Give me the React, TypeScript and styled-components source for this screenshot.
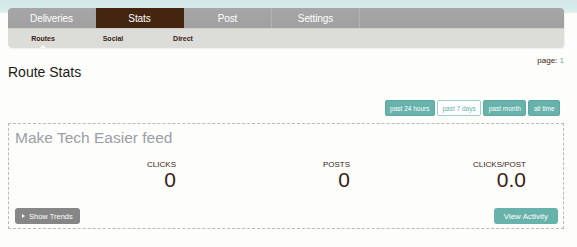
import styled, { createGlobalStyle } from 'styled-components';

const GlobalStyle = createGlobalStyle`
  html, body {
    margin: 0;
    padding: 0;
  }
  body {
    font-family: "Liberation Sans", Arial, sans-serif;
    background: linear-gradient(to bottom, #d2e7e7 0, #dbeded 12px, #eef6f6 13px, #fdfdfb 14px);
    background-repeat: no-repeat;
    background-color: #fdfdfb;
    min-height: 247px;
  }
`;

const Page = styled.div`
  padding: 8px 13px 0 8px;
`;

const Nav = styled.nav`
  border-radius: 4px;
  overflow: hidden;
  box-shadow: 1px 1px 1px rgba(0, 0, 0, 0.06);
`;

const TabRow = styled.div`
  display: flex;
  height: 20px;
  background: linear-gradient(to bottom, #a6a6a6, #a0a0a0);
`;

const Tab = styled.div<{ $active?: boolean }>`
  width: 87px;
  display: flex;
  align-items: center;
  justify-content: center;
  font-size: 10px;
  color: #ffffff;
  letter-spacing: -0.1px;
  background: ${p => (p.$active ? '#44250f' : 'transparent')};
  border-right: 1px solid ${p => (p.$active ? '#44250f' : '#b4b4b4')};
  &:first-child {
    border-right-color: #a3a3a3;
  }
`;

const SubNav = styled.div`
  display: flex;
  height: 20px;
  background: #dcdcd9;
  border-top: 1px solid #cfcfcc;
  box-sizing: border-box;
`;

const SubItem = styled.div<{ $active?: boolean }>`
  position: relative;
  width: 70px;
  display: flex;
  align-items: center;
  justify-content: center;
  font-size: 7px;
  font-weight: bold;
  color: #3a2412;

  &::after {
    content: '';
    display: ${p => (p.$active ? 'block' : 'none')};
    position: absolute;
    bottom: 0;
    left: 50%;
    margin-left: -3px;
    border-left: 3px solid transparent;
    border-right: 3px solid transparent;
    border-bottom: 3px solid #fdfdfb;
  }
`;

const Header = styled.div`
  display: flex;
  justify-content: space-between;
  align-items: flex-start;
`;

const Title = styled.h1`
  margin: 16px 0 0 0;
  font-size: 14px;
  font-weight: normal;
  line-height: 16px;
  color: #1e1a16;
`;

const PageLabel = styled.div`
  margin-top: 8px;
  font-size: 8px;
  color: #3a2412;
  span {
    color: #67b2aa;
  }
`;

const RangeRow = styled.div`
  display: flex;
  justify-content: flex-end;
  gap: 2px;
  margin: 20px 4px 0 0;
`;

const RangeButton = styled.button<{ $active?: boolean }>`
  height: 16px;
  padding: 0 4.5px;
  font-family: inherit;
  font-size: 6.5px;
  border-radius: 2px;
  box-sizing: border-box;
  border: 1px solid ${p => (p.$active ? '#9fd0ca' : '#5fa9a1')};
  background: ${p => (p.$active ? '#ffffff' : '#67b2aa')};
  color: ${p => (p.$active ? '#67b2aa' : '#ffffff')};
  cursor: pointer;
`;

const FeedBox = styled.div`
  margin-top: 7px;
  border: 1px dashed #b9b9b9;
  padding: 5px 5px 4px 5px;
`;

const FeedTitle = styled.h2`
  margin: 0 0 0 1px;
  font-size: 15.5px;
  line-height: 18px;
  font-weight: normal;
  color: #9a9fa6;
`;

const StatGrid = styled.div`
  display: grid;
  grid-template-columns: 162px 174px 176px;
  margin-top: 13px;
`;

const Stat = styled.div`
  text-align: right;
`;

const StatLabel = styled.div`
  font-size: 8px;
  line-height: 9px;
  color: #3a2412;
`;

const StatValue = styled.div`
  font-size: 21px;
  line-height: 24px;
  margin-top: -1px;
  color: #3b2210;
`;

const Actions = styled.div`
  display: flex;
  justify-content: space-between;
  margin-top: 16px;
  padding-left: 1px;
`;

const ActionButton = styled.button<{ $tone: 'gray' | 'teal' }>`
  height: 16px;
  display: flex;
  align-items: center;
  gap: 4px;
  padding: 0 ${p => (p.$tone === 'gray' ? '7px' : '10px')};
  font-family: inherit;
  font-size: ${p => (p.$tone === 'gray' ? '7.5px' : '8px')};
  color: #ffffff;
  border: none;
  border-radius: 3px;
  background: ${p => (p.$tone === 'gray' ? '#868686' : '#67b2aa')};
  cursor: pointer;
`;

const Caret = styled.span`
  width: 0;
  height: 0;
  border-top: 2.5px solid transparent;
  border-bottom: 2.5px solid transparent;
  border-left: 3px solid #ffffff;
`;

const tabs = ['Deliveries', 'Stats', 'Post', 'Settings'];
const subTabs = ['Routes', 'Social', 'Direct'];
const ranges = ['past 24 hours', 'past 7 days', 'past month', 'all time'];
const stats = [
  { label: 'CLICKS', value: '0' },
  { label: 'POSTS', value: '0' },
  { label: 'CLICKS/POST', value: '0.0' },
];

export default function App() {
  return (
    <>
      <GlobalStyle />
      <Page>
        <Nav>
          <TabRow>
            {tabs.map(t => (
              <Tab key={t} $active={t === 'Stats'}>{t}</Tab>
            ))}
          </TabRow>
          <SubNav>
            {subTabs.map(t => (
              <SubItem key={t} $active={t === 'Routes'}>{t}</SubItem>
            ))}
          </SubNav>
        </Nav>

        <Header>
          <Title>Route Stats</Title>
          <PageLabel>page: <span>1</span></PageLabel>
        </Header>

        <RangeRow>
          {ranges.map(r => (
            <RangeButton key={r} $active={r === 'past 7 days'}>{r}</RangeButton>
          ))}
        </RangeRow>

        <FeedBox>
          <FeedTitle>Make Tech Easier feed</FeedTitle>
          <StatGrid>
            {stats.map(s => (
              <Stat key={s.label}>
                <StatLabel>{s.label}</StatLabel>
                <StatValue>{s.value}</StatValue>
              </Stat>
            ))}
          </StatGrid>
          <Actions>
            <ActionButton $tone="gray"><Caret />Show Trends</ActionButton>
            <ActionButton $tone="teal">View Activity</ActionButton>
          </Actions>
        </FeedBox>
      </Page>
    </>
  );
}
